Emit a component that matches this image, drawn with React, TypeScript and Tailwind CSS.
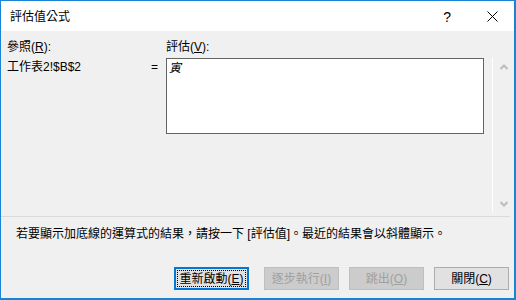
export default function App() {
  const font = "font-['Liberation_Sans','Noto_Sans_CJK_TC',sans-serif]";
  const btn =
    "h-[23px] w-[75px] flex items-center justify-center text-[12px] leading-[16px]";
  return (
    <div
      className={`w-[516px] h-[300px] border-l border-t border-r-2 border-b-2 border-[#1883d7] bg-[#f0f0f0] flex flex-col text-black ${font}`}
    >
      {/* title bar */}
      <div className="h-[30px] bg-white flex items-center shrink-0">
        <span className="pl-[9px] text-[12px] leading-[16px] mt-[1px]">評估值公式</span>
        <span className="ml-auto text-[14px] leading-[16px] mt-[1px]">?</span>
        <svg width="11" height="11" viewBox="0 0 11 11" className="ml-[36px] mr-[16px]">
          <path d="M0.5 0.5 L10.5 10.5 M10.5 0.5 L0.5 10.5" stroke="#000" strokeWidth="1" />
        </svg>
      </div>

      {/* main area */}
      <div className="h-[185px] flex shrink-0">
        <div className="flex-1 flex pl-[6px] pt-[8px] text-[12px] leading-[16px]">
          <div className="w-[159px]">
            <div className="h-[19px]">
              參照(<span className="underline">R</span>):
            </div>
            <div className="flex pt-[1px]">
              <span>工作表2!$B$2</span>
              <span className="ml-auto mr-[8px]">=</span>
            </div>
          </div>
          <div>
            <div className="h-[19px]">
              評估(<span className="underline">V</span>):
            </div>
            <div className="w-[318px] h-[76px] border border-[#646464] bg-white px-[2px] pt-[1px]">
              <span className="italic">寅</span>
            </div>
          </div>
        </div>
        <div className="w-[22px] mt-[27px] h-[154px] border-l border-white flex flex-col justify-between items-center pt-[6px] pb-[5px]">
          <svg width="8" height="6" viewBox="0 0 8 6">
            <path d="M0.5 5 L4 1.5 L7.5 5" stroke="#bcbcbc" strokeWidth="2" fill="none" />
          </svg>
          <svg width="8" height="6" viewBox="0 0 8 6">
            <path d="M0.5 1 L4 4.5 L7.5 1" stroke="#bcbcbc" strokeWidth="2" fill="none" />
          </svg>
        </div>
      </div>

      {/* separator */}
      <div className="h-px bg-[#dadada] mr-[4px] shrink-0" />

      {/* message */}
      <div className="pl-[15px] pt-[9px] text-[12px] leading-[16px]">
        若要顯示加底線的運算式的結果，請按一下 [評估值]。最近的結果會以斜體顯示。
      </div>

      {/* buttons */}
      <div className="flex mt-[25px] pl-[173px]">
        <div className={`${btn} border-2 border-[#0078d7] bg-[#e1e1e1] p-[1px]`}>
          <div className="w-full h-full border border-dotted border-black flex items-center justify-center">
            重新啟動(<span className="underline">E</span>)
          </div>
        </div>
        <div className={`${btn} ml-[15px] border border-[#bfbfbf] bg-[#cccccc] text-[#a0a0a0]`}>
          逐步執行(<span className="underline">I</span>)
        </div>
        <div className={`${btn} ml-[10px] border border-[#bfbfbf] bg-[#cccccc] text-[#a0a0a0]`}>
          跳出(<span className="underline">O</span>)
        </div>
        <div className={`${btn} ml-[10px] border border-[#adadad] bg-[#e1e1e1]`}>
          關閉(<span className="underline">C</span>)
        </div>
      </div>
    </div>
  );
}
